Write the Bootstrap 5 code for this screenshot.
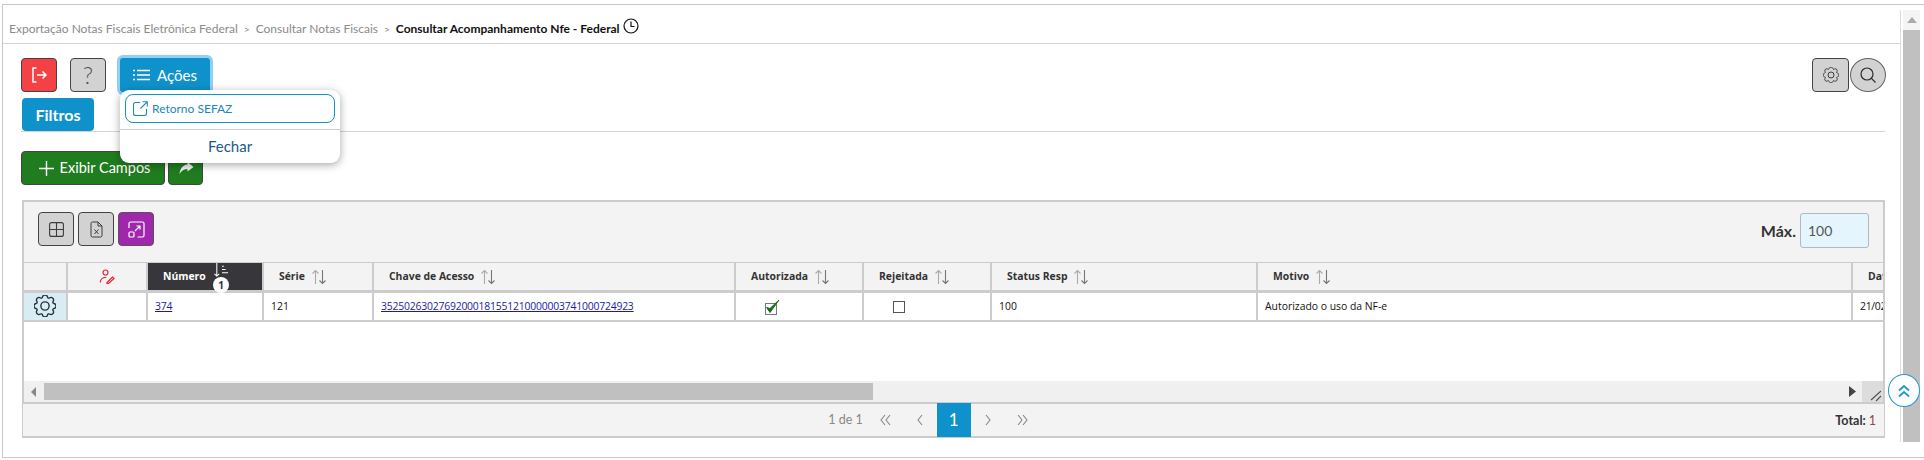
<!DOCTYPE html>
<html lang="pt-BR">
  <head>
    <meta charset="UTF-8" />
    <meta name="viewport" content="width=device-width, initial-scale=1.0" />
    <link href="https://cdn.jsdelivr.net/npm/bootstrap@5.3.0/dist/css/bootstrap.min.css" rel="stylesheet" />
    <title>Consultar Acompanhamento Nfe - Federal</title>
    <style>
      html, body { height: 460px; overflow: hidden; background: #fff; }
      body { font-family: "Lato", sans-serif; }
      svg { display: block; }
      .quadro { margin: 4px 0 0 2px; height: 454px; border: 1px solid #c8c8c8; border-right: 0; display: flex; }
      .painel { width: 1897px; flex: none; position: relative; }
      .trilha { height: 39px; border-bottom: 1px solid #d4d4d4; padding: 10px 0 0 6px; font-size: 12px; color: #8a8a8a; display: flex; align-items: center; }
      .trilha .sep { margin: 0 6px; font-size: 10px; }
      .trilha b { color: #111; font-weight: 700; }
      .relogio { margin: 0 0 6px 3px; }
      .corpo { padding: 14px 15px 0 18px; }
      .botao { height: 34px; border-radius: 4px; border: 1px solid #444; display: inline-flex; align-items: center; justify-content: center; padding: 0; font-size: 15px; color: #fff; }
      .botao:hover { color: #fff; }
      .b-vermelho { width: 36px; background: #f44145; }
      .b-cinza { width: 36px; background: #d2d2d2; color: #3c3c3c; }
      .b-cinza:hover { color: #3c3c3c; background: #d2d2d2; }
      .b-ajuda { font-size: 24px; font-weight: 300; color: #555; }
      .b-roxo { width: 36px; background: #a026ad; border-color: #555; }
      .b-verde { background: #1f7d1f; }
      .b-exibir { width: 144px; gap: 6px; font-size: 14.5px; padding-left: 3px; }
      .b-acoes { width: 90px; background: #0f92cb; border: 0; box-shadow: 0 0 0 3px #90d0f5; gap: 7px; border-radius: 3px; }
      .b-filtros { width: 72px; height: 33px; background: #0f92cb; border: 0; font-weight: 700; font-size: 16px; margin-left: 1px; }
      .menu-acoes { top: 46px; left: 117px; width: 220px; height: 73px; padding: 4px 5px; border: 0; border-radius: 9px; box-shadow: 0 2px 8px rgba(0, 0, 0, .35); min-width: 0; z-index: 5; }
      .menu-acoes .dropdown-item { height: 29px; border: 1px solid #0f92cb; border-radius: 8px; display: flex; align-items: center; padding: 0 7px; gap: 4px; font-size: 12px; color: #1b87bd; }
      .menu-acoes .dropdown-divider { margin: 6px -5px 0; border-color: #ccc; opacity: 1; }
      .menu-acoes .fechar { text-align: center; font-size: 15px; color: #20588f; line-height: 33px; }
      .linha-sep { margin: 0; border-color: #d4d4d4; opacity: 1; }
      .lado-dir { margin-right: -1px; }
      .busca { width: 36px; height: 34px; border: 1px solid #666; border-radius: 50%; background: #d2d2d2; color: #2c2c2c; display: flex; align-items: center; justify-content: center; padding: 0; margin-left: 1px; }
      .bloco { margin-top: 15px; width: 1863px; margin-left: 1px; border: 2px solid #ccc; border-bottom: 0; }
      .barra-grade { height: 61px; background: #f3f3f3; padding: 10px 14px; border-bottom: 1px solid #ccc; }
      .rotulo-max { font-size: 16px; font-weight: 700; color: #333; margin-right: 4px; }
      .campo-max { width: 69px; height: 35px; padding: 0 7px; font-size: 14px; border-radius: 3px; border-color: #aeb9c2; background: #e5f5fd; color: #555; }
      .area-grade { height: 118px; overflow: hidden; }
      .grade { table-layout: fixed; width: 2028px; margin: 0; font-family: "Open Sans", sans-serif; font-size: 10.4px; color: #111; }
      .grade th, .grade td { border: 0; border-right: 2px solid #ccc; padding: 1px 0 0; vertical-align: middle; }
      .grade th { height: 28px; background: #f3f3f3; font-weight: 700; font-size: 10.4px; color: #333; padding-left: 15px; border-bottom: 3px solid #ccc; white-space: nowrap; }
      .grade td { height: 30px; padding-left: 7px; border-bottom: 2px solid #ccc; white-space: nowrap; }
      .grade a { color: #1a1aa6; letter-spacing: -.2px; }
      .grade td.marca { padding-left: 29px; }
      .grade td.data { letter-spacing: -.3px; }
      .titulo-ordem { display: flex; align-items: center; gap: 6px; }
      .grade th.ativa { background: #37373b; color: #fff; position: relative; }
      .ordem-atual { position: absolute; top: 0; left: 66px; color: #fff; }
      .selo-ordem { position: absolute; top: 14px; left: 65px; width: 16px; height: 16px; border-radius: 50%; background: #fff; color: #333; font-size: 10px; line-height: 16px; text-align: center; }
      .grade td.acao { background: #d8edf3; padding: 0; color: #24313d; }
      .rolagem-h { height: 21px; background: #f0f0f0; display: flex; align-items: center; position: relative; }
      .rolagem-h .seta { width: 20px; flex: none; color: #888; }
      .polegar-h { width: 829px; height: 17px; background: #c0c0c0; }
      .canto { position: absolute; right: 0; top: 0; width: 21px; height: 21px; background: #dcdcdc; color: #555; }
      .rodape-grade { height: 36px; background: #f3f3f3; border: 2px solid #ccc; border-left-width: 1px; border-right-width: 1px; margin: 0 0 0 1px; padding-right: 40px; position: relative; font-size: 12.5px; color: #888; }
      .rodape-grade .pg { width: 34px; height: 34px; display: flex; align-items: center; justify-content: center; color: #888; }
      .rodape-grade .pg.atual { background: #0f92cb; color: #fff; font-size: 17px; }
      .pagina-txt { margin-right: 6px; }
      .total { position: absolute; right: 8px; top: 8px; font-weight: 700; color: #333; }
      .total span { font-weight: 400; color: #8b4a3a; }
      .rolagem-v { margin-top: 5px; width: 20px; height: 432px; border-left: 1px solid #ddd; padding-left: 2px; }
      .rolagem-v .topo { height: 20px; background: #f4f4f4; color: #aaa; display: flex; align-items: center; justify-content: center; }
      .rolagem-v .polegar-v { height: 412px; background: #c0c0c0; }
      .voltar-topo { position: absolute; left: 1888px; top: 374px; width: 32px; height: 33px; border-radius: 50%; background: #fff; border: 1px solid #1f97d4; color: #1f97d4; display: flex; align-items: center; justify-content: center; z-index: 6; }
    </style>
  </head>
  <body>
    <svg width="0" height="0" class="position-absolute">
      <symbol id="i-engrenagem" viewBox="0 0 16 16">
        <path fill="none" stroke="currentColor" d="M8 5a3 3 0 1 0 0 6 3 3 0 0 0 0-6zM9.796 1.343c-.527-1.79-3.065-1.79-3.592 0l-.094.319a.873.873 0 0 1-1.255.52l-.292-.16c-1.64-.892-3.433.902-2.54 2.541l.159.292a.873.873 0 0 1-.52 1.255l-.319.094c-1.79.527-1.79 3.065 0 3.592l.319.094a.873.873 0 0 1 .52 1.255l-.16.292c-.892 1.64.901 3.434 2.541 2.54l.292-.159a.873.873 0 0 1 1.255.52l.094.319c.527 1.79 3.065 1.79 3.592 0l.094-.319a.873.873 0 0 1 1.255-.52l.292.16c1.64.893 3.434-.902 2.54-2.541l-.159-.292a.873.873 0 0 1 .52-1.255l.319-.094c1.79-.527 1.79-3.065 0-3.592l-.319-.094a.873.873 0 0 1-.52-1.255l.16-.292c.893-1.64-.902-3.433-2.541-2.54l-.292.159a.873.873 0 0 1-1.255-.52l-.094-.319z" />
      </symbol>
      <symbol id="i-ordena" viewBox="0 0 16 16">
        <path fill="none" stroke="#aaa" stroke-width="1.1" d="M4.500 15V1.500M1.500 4.500l3-3 3 3" />
        <path fill="none" stroke="#777" stroke-width="1.1" d="M11.500 1v13.500M8.500 11.500l3 3 3-3" />
      </symbol>
      <symbol id="i-duplo-esq" viewBox="0 0 14 14">
        <path fill="none" stroke="#888" stroke-width="1.1" d="M6 2 2 7l4 5M11 2 7 7l4 5" />
      </symbol>
      <symbol id="i-duplo-dir" viewBox="0 0 14 14">
        <path fill="none" stroke="#888" stroke-width="1.1" d="M3 2l4 5-4 5M8 2l4 5-4 5" />
      </symbol>
      <symbol id="i-esq" viewBox="0 0 14 14">
        <path fill="none" stroke="#888" stroke-width="1.1" d="M9 2 5 7l4 5" />
      </symbol>
      <symbol id="i-dir" viewBox="0 0 14 14">
        <path fill="none" stroke="#888" stroke-width="1.1" d="M5 2l4 5-4 5" />
      </symbol>
    </svg>

    <div class="quadro">
      <div class="painel">
        <div class="trilha">
          <span>Exportação Notas Fiscais Eletrônica Federal</span><span class="sep">&gt;</span>
          <span>Consultar Notas Fiscais</span><span class="sep">&gt;</span>
          <b>Consultar Acompanhamento Nfe - Federal</b>
          <svg class="relogio" width="16" height="16" viewBox="0 0 16 16" fill="none" stroke="#111" stroke-width="1.2"><circle cx="8" cy="8" r="7" /><path d="M8 3.500V8.500H11.500" /></svg>
        </div>
        <div class="corpo position-relative">
          <div class="d-flex align-items-start">
            <button class="botao b-vermelho" type="button" aria-label="Sair">
              <svg width="18" height="18" viewBox="0 0 18 18" fill="none" stroke="#fff" stroke-width="1.500"><path d="M6.500 2H3v14h3.500M7 9h9M12.500 5.500 16 9l-3.500 3.500" /></svg>
            </button>
            <button class="botao b-cinza b-ajuda" style="margin-left:13px" type="button">?</button>
            <button class="botao b-acoes" style="margin-left:14px" type="button">
              <svg width="17" height="14" viewBox="0 0 17 14" fill="none" stroke="#fff" stroke-width="1.400"><path d="M4 2.500h13M4 7h13M4 11.500h13M0 2.500h2M0 7h2M0 11.500h2" /></svg>Ações
            </button>
            <div class="ms-auto d-flex lado-dir">
              <button class="botao b-cinza" style="width:37px" type="button" aria-label="Configurar">
                <svg width="16" height="16"><use href="#i-engrenagem" /></svg>
              </button>
              <button class="busca" type="button" aria-label="Buscar">
                <svg width="16" height="16" viewBox="0 0 16 16" fill="none" stroke="currentColor" stroke-width="1.200"><circle cx="7" cy="7" r="6" /><path d="M11.200 11.200 15.500 15.500" /></svg>
              </button>
            </div>
          </div>

          <div class="dropdown-menu show menu-acoes">
            <a class="dropdown-item" href="#">
              <svg width="15" height="15" viewBox="0 0 15 15" fill="none" stroke="#1b87bd" stroke-width="1.100"><path d="M7 1.500H2.500a2 2 0 0 0-2 2v9a2 2 0 0 0 2 2h9a2 2 0 0 0 2-2V8M9.500 .7h4.800v4.800M14.200 .8 7.500 7.500" /></svg>
              <span>Retorno SEFAZ</span>
            </a>
            <hr class="dropdown-divider" />
            <div class="fechar">Fechar</div>
          </div>

          <div style="margin-top:6px"><button class="botao b-filtros" type="button">Filtros</button></div>
          <hr class="linha-sep" />

          <div class="d-flex" style="margin-top:19px;gap:3px">
            <button class="botao b-verde b-exibir" type="button">
              <svg width="15" height="15" viewBox="0 0 15 15" stroke="#fff" stroke-width="1.400"><path d="M7.500 0v15M0 7.500h15" /></svg>Exibir Campos
            </button>
            <button class="botao b-verde" style="width:35px" type="button" aria-label="Compartilhar">
              <svg width="16" height="14" viewBox="0 0 16 14" fill="#f2f2f2"><path d="M9.500 1 15.500 6 9.500 10.500V8C6 8 3.500 9.500 1.500 13 2 8 4.500 4 9.500 3.500z" /></svg>
            </button>
          </div>

          <div class="bloco">
            <div class="barra-grade d-flex align-items-start">
              <div class="d-flex gap-1">
                <button class="botao b-cinza" type="button" aria-label="Colunas">
                  <svg width="15" height="15" viewBox="0 0 15 15" fill="none" stroke="currentColor" stroke-width="1.100"><rect x=".6" y=".6" width="13.800" height="13.800" rx="2" /><path d="M7.500 .6v13.800M.6 7.500h13.800" /></svg>
                </button>
                <button class="botao b-cinza" type="button" aria-label="Excel">
                  <svg width="13" height="17" viewBox="0 0 13 17" fill="none" stroke="currentColor"><path d="M1 2.500A1.500 1.500 0 0 1 2.500 1H8l4 4v9.500a1.500 1.500 0 0 1-1.500 1.500h-8A1.500 1.500 0 0 1 1 14.500zM8 1v4h4M4.500 8.500l4 4.500M8.500 8.500l-4 4.500" /></svg>
                </button>
                <button class="botao b-roxo" type="button" aria-label="Expandir">
                  <svg width="17" height="17" viewBox="0 0 17 17" fill="none" stroke="#fff" stroke-width="1.200"><path d="M1 7V2.500A1.500 1.500 0 0 1 2.500 1h12A1.500 1.500 0 0 1 16 2.500v12a1.500 1.500 0 0 1-1.500 1.500H9.500M7 10l5-5M8.500 5H12v3.500" /><rect x="1" y="11" width="5" height="5" rx="1" /></svg>
                </button>
              </div>
              <div class="ms-auto d-flex align-items-center" style="margin-top:1px">
                <label class="rotulo-max" for="campoMax">Máx.</label>
                <input id="campoMax" class="form-control campo-max" value="100" />
              </div>
            </div>

            <div class="area-grade">
              <table class="table grade">
                <colgroup>
                  <col style="width:43px" /><col style="width:80px" /><col style="width:116px" /><col style="width:110px" /><col style="width:362px" /><col style="width:128px" /><col style="width:128px" /><col style="width:266px" /><col style="width:595px" /><col style="width:200px" />
                </colgroup>
                <thead>
                  <tr>
                    <th></th>
                    <th class="p-0"><svg class="mx-auto" width="16" height="15" viewBox="0 0 15 15" fill="none" stroke="#f0202a" stroke-width="1.200"><circle cx="6" cy="3.500" r="2.500" /><path d="M.8 13.500c0-3.500 2.500-5 6-5M7.500 13.500l5.500-5.500 1.500 1.500-5.500 5H7.500z" /></svg></th>
                    <th class="ativa">Número
                      <svg class="ordem-atual" width="15" height="15" viewBox="0 0 16 16" fill="none" stroke="#fff" stroke-width="1.100"><path d="M3 0v14M.5 11.500 3 14l2.500-2.500M8.500 3.500h2M8.500 7h4M8.500 10.500h6.500" /></svg>
                      <span class="selo-ordem">1</span>
                    </th>
                    <th><div class="titulo-ordem">Série <svg width="16" height="16"><use href="#i-ordena" /></svg></div></th>
                    <th><div class="titulo-ordem">Chave de Acesso <svg width="16" height="16"><use href="#i-ordena" /></svg></div></th>
                    <th><div class="titulo-ordem">Autorizada <svg width="16" height="16"><use href="#i-ordena" /></svg></div></th>
                    <th><div class="titulo-ordem">Rejeitada <svg width="16" height="16"><use href="#i-ordena" /></svg></div></th>
                    <th><div class="titulo-ordem">Status Resp <svg width="16" height="16"><use href="#i-ordena" /></svg></div></th>
                    <th><div class="titulo-ordem">Motivo <svg width="16" height="16"><use href="#i-ordena" /></svg></div></th>
                    <th>Data</th>
                  </tr>
                </thead>
                <tbody>
                  <tr>
                    <td class="acao"><svg class="mx-auto" width="22" height="22"><use href="#i-engrenagem" /></svg></td>
                    <td></td>
                    <td><a href="#">374</a></td>
                    <td>121</td>
                    <td><a href="#">35250263027692000181551210000003741000724923</a></td>
                    <td class="marca"><svg width="16" height="16" viewBox="0 0 16 16"><rect x=".5" y="4.500" width="11" height="11" fill="#fff" stroke="#777" /><path d="M1.500 8.500 5 13.500 14 1 5 9.500z" fill="#156e15" stroke="#156e15" /></svg></td>
                    <td class="marca"><svg width="12" height="12" viewBox="0 0 12 12"><rect x=".5" y=".5" width="11" height="11" fill="#fff" stroke="#555" /></svg></td>
                    <td>100</td>
                    <td>Autorizado o uso da NF-e</td>
                    <td class="data">21/02/2025</td>
                  </tr>
                </tbody>
              </table>
            </div>

            <div class="rolagem-h">
              <div class="seta"><svg class="mx-auto" width="6" height="10" viewBox="0 0 6 10" fill="currentColor"><path d="M5 0v10L0 5z" /></svg></div>
              <div class="polegar-h"></div>
              <div class="ms-auto seta" style="margin-right:21px;color:#444"><svg class="mx-auto" width="7" height="11" viewBox="0 0 7 11" fill="currentColor"><path d="M0 0v11l7-5.500z" /></svg></div>
              <div class="canto"><svg class="ms-auto" width="21" height="21" viewBox="0 0 21 21" fill="none" stroke="currentColor" stroke-width="1.200"><path d="M9 19 19 10M14 20l5-5" /></svg></div>
            </div>
          </div>

          <div class="rodape-grade d-flex align-items-center justify-content-center" style="width:1863px">
            <span class="pagina-txt">1 de 1</span>
            <span class="pg"><svg width="14" height="14"><use href="#i-duplo-esq" /></svg></span>
            <span class="pg"><svg width="14" height="14"><use href="#i-esq" /></svg></span>
            <span class="pg atual">1</span>
            <span class="pg"><svg width="14" height="14"><use href="#i-dir" /></svg></span>
            <span class="pg"><svg width="14" height="14"><use href="#i-duplo-dir" /></svg></span>
            <span class="total">Total: <span>1</span></span>
          </div>
        </div>
      </div>
      <div class="rolagem-v">
        <div class="topo"><svg width="10" height="6" viewBox="0 0 10 6" fill="currentColor"><path d="M0 6h10L5 0z" /></svg></div>
        <div class="polegar-v"></div>
      </div>
      <div class="voltar-topo">
        <svg width="14" height="14" viewBox="0 0 14 14" fill="none" stroke="currentColor" stroke-width="1.800"><path d="M2 6.500 7 2l5 4.500M2 12.500 7 8l5 4.500" /></svg>
      </div>
    </div>
    <script src="https://cdn.jsdelivr.net/npm/bootstrap@5.3.0/dist/js/bootstrap.bundle.min.js"></script>
  </body>
</html>
